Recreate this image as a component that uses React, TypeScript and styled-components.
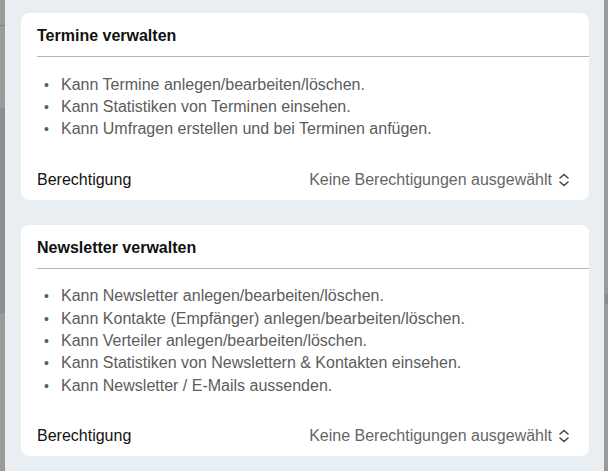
import React from "react";
import styled, { createGlobalStyle } from "styled-components";

const GlobalStyle = createGlobalStyle`
  html, body {
    margin: 0;
    padding: 0;
    background: #9a9a9a;
    font-family: "Liberation Sans", Arial, sans-serif;
  }
`;

const Backdrop = styled.div`
  width: 608px;
  height: 471px;
  overflow: hidden;
  display: flex;
  background:
    linear-gradient(#8a8d91, #8a8d91) 0 108px / 5px 205px no-repeat,
    linear-gradient(#7f7f7f, #7f7f7f) 0 25px / 5px 1px no-repeat,
    linear-gradient(#8a8a8a, #8a8a8a) right 0 top 294px / 3px 10px no-repeat,
    #9a9a9a;
`;

const Modal = styled.div`
  flex: 1;
  margin: 0 4px 0 5px;
  background: #e9eef2;
  padding: 13px 15px 0 16px;
  display: flex;
  flex-direction: column;
  gap: 25px;
`;

const Card = styled.section`
  background: #ffffff;
  border-radius: 8px;
  padding-left: 16px;
  display: flex;
  flex-direction: column;
`;

const CardHeader = styled.div`
  padding: 12px 0 10px;
  border-bottom: 1px solid #b4b4b4;
`;

const Title = styled.h2`
  margin: 0;
  font-size: 16px;
  line-height: 21px;
  font-weight: 700;
  color: #111;
`;

const List = styled.ul`
  margin: 16.5px 0 0;
  padding: 0 19px 0 7px;
  list-style: none;
  color: #5c5c5c;
  font-size: 16px;
  line-height: 22.4px;
`;

const Item = styled.li`
  display: flex;
  &::before {
    content: "•";
    flex: none;
    width: 17px;
    font-size: 14px;
  }
`;

const PermissionRow = styled.div`
  display: flex;
  align-items: center;
  justify-content: space-between;
  padding: 27px 19px 8px 0;
  font-size: 16px;
  line-height: 24px;
`;

const Label = styled.span`
  color: #111;
`;

const Select = styled.button`
  display: flex;
  align-items: center;
  gap: 6px;
  border: none;
  background: none;
  padding: 0;
  font: inherit;
  color: #666;
  cursor: pointer;
`;

const Chevrons = () => (
  <svg width="12" height="14" viewBox="0 0 12 14" fill="none" stroke="#444" strokeWidth="1.6" strokeLinecap="round" strokeLinejoin="round">
    <path d="M2 5 L6 1.5 L10 5" />
    <path d="M2 9 L6 12.5 L10 9" />
  </svg>
);

interface Section {
  title: string;
  items: string[];
}

const sections: Section[] = [
  {
    title: "Termine verwalten",
    items: [
      "Kann Termine anlegen/bearbeiten/löschen.",
      "Kann Statistiken von Terminen einsehen.",
      "Kann Umfragen erstellen und bei Terminen anfügen.",
    ],
  },
  {
    title: "Newsletter verwalten",
    items: [
      "Kann Newsletter anlegen/bearbeiten/löschen.",
      "Kann Kontakte (Empfänger) anlegen/bearbeiten/löschen.",
      "Kann Verteiler anlegen/bearbeiten/löschen.",
      "Kann Statistiken von Newslettern & Kontakten einsehen.",
      "Kann Newsletter / E-Mails aussenden.",
    ],
  },
];

const App = () => {
  return (
    <>
      <GlobalStyle />
      <Backdrop>
        <Modal>
          {sections.map((section) => (
            <Card key={section.title}>
              <CardHeader>
                <Title>{section.title}</Title>
              </CardHeader>
              <List>
                {section.items.map((item) => (
                  <Item key={item}>{item}</Item>
                ))}
              </List>
              <PermissionRow>
                <Label>Berechtigung</Label>
                <Select>
                  Keine Berechtigungen ausgewählt
                  <Chevrons />
                </Select>
              </PermissionRow>
            </Card>
          ))}
        </Modal>
      </Backdrop>
    </>
  );
};

export default App;
